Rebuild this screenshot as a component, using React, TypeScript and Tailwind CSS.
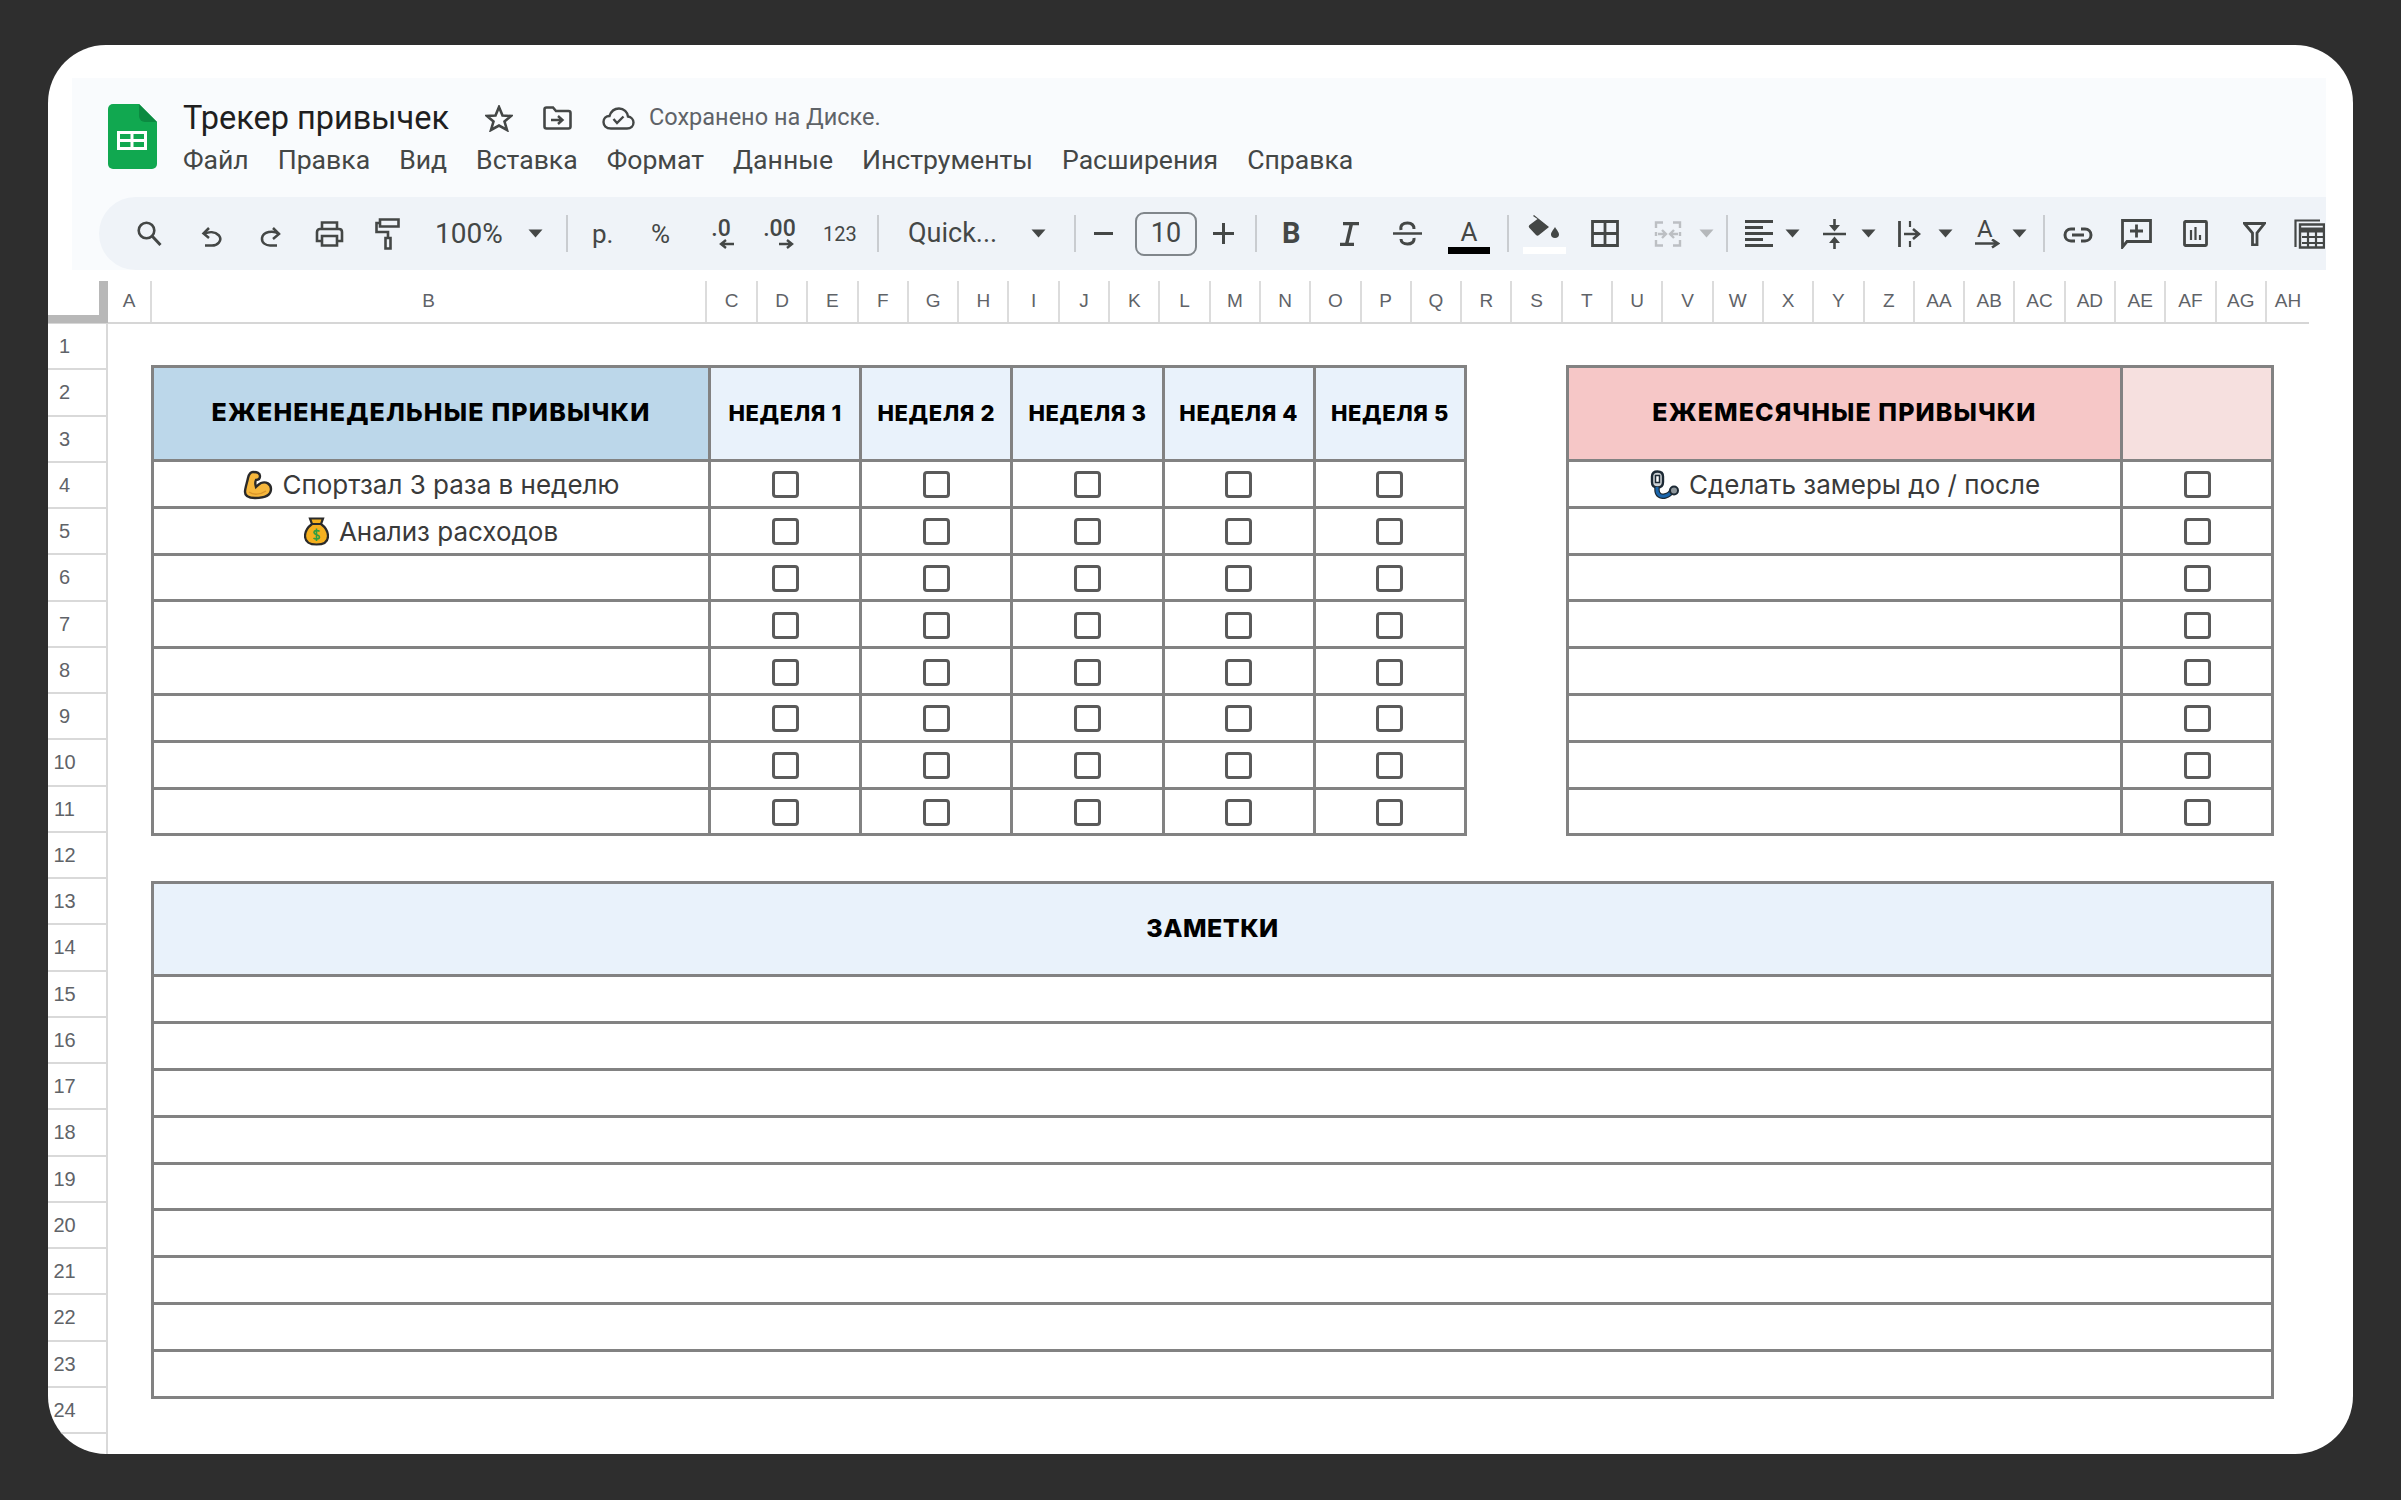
const GOOGLE = "font-['Roboto','Noto_Sans',sans-serif]";
const TABLE_FONT = "font-['Inter','Noto_Sans',sans-serif]";

const MENU = [
  "Файл",
  "Правка",
  "Вид",
  "Вставка",
  "Формат",
  "Данные",
  "Инструменты",
  "Расширения",
  "Справка",
];

const COLS_NARROW_1 = ["D","E","F","G","H","I","J","K","L","M","N","O","P","Q","R","S","T","U","V","W","X","Y","Z","AA","AB","AC","AD","AE","AF","AG"];
const ROW_NUMBERS = Array.from({ length: 25 }, (_, i) => i + 1);

function Ic({ w, h, vb, className = "", children }: { w: number; h: number; vb: string; className?: string; children: React.ReactNode }) {
  return (
    <svg width={w} height={h} viewBox={vb} fill="none" stroke="#444746" strokeWidth="2" className={`shrink-0 ${className}`}>
      {children}
    </svg>
  );
}

function Caret({ ml, grey }: { ml: string; grey?: boolean }) {
  return (
    <svg width="15" height="9" viewBox="0 0 15 9" className={`shrink-0 ${ml}`}>
      <path d="M0.5 0.5H14.5L7.5 8.5Z" fill={grey ? "#b5b8bb" : "#444746"} />
    </svg>
  );
}

function Sep({ ml }: { ml: string }) {
  return <div className={`h-[37px] w-[2px] shrink-0 bg-[#c9ccd0] ${ml}`} />;
}

function SheetsLogo() {
  return (
    <svg width="49" height="65" viewBox="0 0 49 65" className="shrink-0">
      <path d="M5 0H31L49 18V60a5 5 0 0 1-5 5H5a5 5 0 0 1-5-5V5a5 5 0 0 1 5-5Z" fill="#11a850" />
      <path d="M31 0L49 18H37a6 6 0 0 1-6-6Z" fill="#0c8a41" />
      <path d="M9 27H39V46H9Z" fill="#fff" />
      <path d="M12 30H22.5V35H12ZM25.5 30H36V35H25.5ZM12 38H22.5V43H12ZM25.5 38H36V43H25.5Z" fill="#11a850" />
    </svg>
  );
}

function Biceps() {
  return (
    <svg width="30" height="30" viewBox="0 0 30 30" className="shrink-0">
      <path d="M10 2C7 2 6 4 5 8C4 13 2 18 2 22C2 26 6 28 12 28C20 28 28 26 28 19C28 14 23 11 18 13C16 14 14 16 13 17C12 14 12 12 13 10C15 10 17 9 17 6C17 3 14 2 10 2Z" fill="#f6b73c" stroke="#2a2a2a" strokeWidth="2.400" />
      <path d="M6 22C10 25 17 25 23 21" fill="none" stroke="#d9952a" strokeWidth="1.500" />
    </svg>
  );
}

function MoneyBag() {
  return (
    <svg width="25" height="29" viewBox="0 0 25 29" className="shrink-0">
      <path d="M6 1.500H19L17 7C21 10 24 14 24 19C24 25 19 27.500 12.500 27.500C6 27.500 1 25 1 19C1 14 4 10 8 7Z" fill="#f5b01f" stroke="#2a2a2a" strokeWidth="2.200" />
      <path d="M8 7H17" stroke="#2a2a2a" strokeWidth="2" />
      <path d="M15.500 14.500C14.500 13 10 13 10 15.500C10 18 15.500 17.500 15.500 20C15.500 22.500 11 22.500 9.500 21M12.500 11.500V24" fill="none" stroke="#2f9e44" strokeWidth="1.600" />
    </svg>
  );
}

function Stethoscope() {
  return (
    <svg width="30" height="29" viewBox="0 0 30 29" className="shrink-0">
      <path d="M3 6.500C3 3 5 1.500 8.500 1.500C12 1.500 14 3 14 6.500V12C14 15.500 12 17.500 8.500 17.500C5 17.500 3 15.500 3 12Z" fill="#cfd4d7" stroke="#1d2a35" strokeWidth="2.400" />
      <path d="M6.500 5.500H10.500V12.500H6.500Z" fill="#fff" stroke="#1d2a35" strokeWidth="1.500" />
      <path d="M8 17V20C8 25 12 27 16 26C20 25 22 23 23 20" fill="none" stroke="#1d2a35" strokeWidth="5.500" />
      <path d="M8 17V20C8 25 12 27 16 26C20 25 22 23 23 20" fill="none" stroke="#1a66ac" strokeWidth="3" />
      <circle cx="25" cy="20.500" r="4" fill="#8f979c" stroke="#1d2a35" strokeWidth="2" />
    </svg>
  );
}

function Toolbar() {
  return (
    <div className={`ml-[27px] flex h-[73px] items-center overflow-hidden rounded-l-[37px] bg-[#eff3f8] text-[#444746] ${GOOGLE}`}>
      {/* search */}
      <Ic w={25} h={25} vb="0 0 25 25" className="ml-[38px]" >
        <circle cx="9.500" cy="9.500" r="7.800" strokeWidth="2.600" />
        <path d="M15 15L23.500 24" strokeWidth="3" />
      </Ic>
      {/* undo */}
      <Ic w={22} h={21} vb="0 0 22 21" className="ml-[39px] mt-[6px]">
        <path d="M3 8C8 5.500 14 5.500 18 9.500C22 15 16 19.500 11 19.500H4" strokeWidth="2.500" />
        <path d="M8 2L2.500 7.500L8 12" strokeWidth="2.500" />
      </Ic>
      {/* redo */}
      <Ic w={21} h={21} vb="0 0 21 21" className="ml-[37px] mt-[6px]">
        <path d="M19 8C13 3.500 3 6 2 12C1.500 17 6 19.500 10 19.500H17" strokeWidth="2.500" />
        <path d="M13 2L19 8L13 13" strokeWidth="2.500" />
      </Ic>
      {/* print */}
      <Ic w={29} h={26} vb="0 0 29 26" className="ml-[34px]">
        <path d="M7 8V1.500H22V8" strokeWidth="2.600" />
        <path d="M7 20H2V11C2 9 3.500 8 5 8H24C26 8 27 9 27 11V20H22" strokeWidth="2.600" />
        <path d="M7 15H22V24.500H7Z" strokeWidth="2.600" />
      </Ic>
      {/* paint format */}
      <Ic w={25} h={32} vb="0 0 25 32" className="ml-[31px]">
        <path d="M5 1.500H23.500V8.500H5Z" strokeWidth="2.600" />
        <path d="M5 5H1.500V14H13V20" strokeWidth="2.600" />
        <path d="M10.500 20H15.500V30.500H10.500Z" strokeWidth="2.600" />
      </Ic>
      <span className="ml-[35px] w-[68px] whitespace-nowrap text-[28px] leading-none">100%</span>
      <Caret ml="ml-[25px]" />
      <Sep ml="ml-[23px]" />
      <span className="ml-[24px] w-[21px] whitespace-nowrap text-[26px] leading-none">р.</span>
      <span className="ml-[38px] w-[20px] whitespace-nowrap text-[26px] leading-none">%</span>
      {/* decrease decimals */}
      <div className="ml-[35px] flex w-[30px] flex-col items-center">
        <span className="text-[23px] font-medium leading-[20px]">.0</span>
        <svg width="16" height="10" viewBox="0 0 16 10" className="ml-[12px]">
          <path d="M15 5H3M7 1L2 5L7 9" fill="none" stroke="#444746" strokeWidth="2.400" />
        </svg>
      </div>
      {/* increase decimals */}
      <div className="ml-[28px] flex w-[31px] flex-col items-center">
        <span className="text-[23px] font-medium leading-[20px]">.00</span>
        <svg width="16" height="10" viewBox="0 0 16 10" className="ml-[12px]">
          <path d="M1 5H13M9 1L14 5L9 9" fill="none" stroke="#444746" strokeWidth="2.400" />
        </svg>
      </div>
      <span className="ml-[28px] w-[33px] whitespace-nowrap text-[20px] leading-none">123</span>
      <Sep ml="ml-[21px]" />
      <span className="ml-[29px] w-[89px] whitespace-nowrap text-[27px] leading-none">Quick...</span>
      <Caret ml="ml-[34px]" />
      <Sep ml="ml-[28px]" />
      {/* minus */}
      <div className="ml-[18px] h-[3px] w-[19px] shrink-0 bg-[#444746]" />
      <div className="ml-[22px] flex h-[44px] w-[62px] shrink-0 items-center justify-center rounded-[9px] border-2 border-[#80868b] text-[27px] leading-none">
        10
      </div>
      {/* plus */}
      <Ic w={21} h={21} vb="0 0 21 21" className="ml-[16px]">
        <path d="M0 10.500H21M10.500 0V21" strokeWidth="3" />
      </Ic>
      <Sep ml="ml-[21px]" />
      <span className="ml-[25px] w-[17px] text-[29px] font-bold leading-none">B</span>
      {/* italic */}
      <Ic w={19} h={24} vb="0 0 19 24" className="ml-[41px]">
        <path d="M3 1.500H19M0 22.500H14M11.500 1.500L6.500 22.500" strokeWidth="3.400" />
      </Ic>
      {/* strikethrough */}
      <Ic w={29} h={25} vb="0 0 29 25" className="ml-[34px]">
        <path d="M0 12.500H29" strokeWidth="2.400" />
        <path d="M8 9C7 4 10 2 14.500 2C18 2 21 3.500 21 8" strokeWidth="3" />
        <path d="M21 17C21.500 21 18.500 23 14.500 23C10.500 23 8 21 8 18" strokeWidth="3" />
      </Ic>
      {/* text colour */}
      <div className="ml-[26px] mt-[6px] flex w-[42px] shrink-0 flex-col items-center">
        <span className="text-[26px] leading-[24px]">A</span>
        <div className="mt-[3px] h-[7px] w-[42px] bg-black" />
      </div>
      <Sep ml="ml-[17px]" />
      {/* fill colour */}
      <div className="ml-[14px] flex w-[43px] shrink-0 flex-col items-start">
        <svg width="32" height="26" viewBox="0 0 32 26" className="ml-[5px]">
          <path d="M6 1L21 13L11 21C10 22 9 22 8 21L1.500 14C0.500 13 0.500 12 1.500 11L9.500 5L5 2Z" fill="#444746" />
          <path d="M27 13C29.500 17 31 18.500 31 20.500C31 22.500 29.500 24 27 24C24.500 24 23 22.500 23 20.500C23 18.500 24.500 17 27 13Z" fill="#444746" />
        </svg>
        <div className="mt-[7px] h-[7px] w-[43px] bg-white" />
      </div>
      {/* borders */}
      <Ic w={28} h={27} vb="0 0 28 27" className="ml-[25px]">
        <path d="M1.500 1.500H26.500V25.500H1.500ZM14 1.500V25.500M1.500 13.500H26.500" strokeWidth="2.800" />
      </Ic>
      {/* merge */}
      <svg width="28" height="26" viewBox="0 0 28 26" fill="none" stroke="#bcbfc3" strokeWidth="2.400" className="ml-[35px] shrink-0">
        <path d="M9 1.500H2V7M2 11V15M2 19V24.500H9M19 1.500H26V7M26 11V15M26 19V24.500H19" />
        <path d="M4 13H11M8 9L12 13L8 17M24 13H17M20 9L16 13L20 17" />
      </svg>
      <Caret ml="ml-[17px]" grey />
      <Sep ml="ml-[12px]" />
      {/* align */}
      <Ic w={28} h={27} vb="0 0 28 27" className="ml-[17px]">
        <path d="M0 1.500H28M0 7.500H18M0 13.500H28M0 19.500H18M0 25.500H28" strokeWidth="2.800" />
      </Ic>
      <Caret ml="ml-[12px]" />
      {/* vertical align */}
      <Ic w={23} h={30} vb="0 0 23 30" className="ml-[23px]">
        <path d="M0 15H23" strokeWidth="2.600" />
        <path d="M11.500 0V9" strokeWidth="2.600" />
        <path d="M11.500 30V21" strokeWidth="2.600" />
        <path d="M6 6H17L11.500 12.500Z" fill="#444746" stroke="none" />
        <path d="M6 24H17L11.500 17.500Z" fill="#444746" stroke="none" />
      </Ic>
      <Caret ml="ml-[15px]" />
      {/* wrap */}
      <Ic w={23} h={26} vb="0 0 23 26" className="ml-[22px]">
        <path d="M1.500 0V26" strokeWidth="2.800" />
        <path d="M12 0V6M12 20V26" strokeWidth="2.200" />
        <path d="M6 13H19M15 8L21 13L15 18" strokeWidth="2.600" />
      </Ic>
      <Caret ml="ml-[17px]" />
      {/* rotate */}
      <div className="ml-[22px] flex w-[25px] shrink-0 flex-col items-start">
        <span className="ml-[2px] text-[24px] leading-[20px]">A</span>
        <svg width="25" height="10" viewBox="0 0 25 10">
          <path d="M0 4.500H22M17 0.500L23 4.500L17 8.500" fill="none" stroke="#444746" strokeWidth="2.600" />
        </svg>
      </div>
      <Caret ml="ml-[12px]" />
      <Sep ml="ml-[16px]" />
      {/* link */}
      <Ic w={30} h={16} vb="0 0 30 16" className="ml-[18px] mt-[2px]">
        <path d="M12 2H8C4.500 2 2 4.500 2 8C2 11.500 4.500 14 8 14H12M18 2H22C25.500 2 28 4.500 28 8C28 11.500 25.500 14 22 14H18M9 8H21" strokeWidth="3" />
      </Ic>
      {/* comment */}
      <Ic w={31} h={30} vb="0 0 31 30" className="ml-[28px]">
        <path d="M1.500 1.500H29.500V22.500H6L1.500 28Z" strokeWidth="2.800" />
        <path d="M9 12H22M15.500 5.500V18.500" strokeWidth="2.800" />
      </Ic>
      {/* chart */}
      <Ic w={25} h={27} vb="0 0 25 27" className="ml-[31px]">
        <path d="M2.500 1.500H22.500C23 1.500 23.500 2 23.500 2.500V24.500C23.500 25 23 25.500 22.500 25.500H2.500C2 25.500 1.500 25 1.500 24.500V2.500C1.500 2 2 1.500 2.500 1.500Z" strokeWidth="2.800" />
        <path d="M8 10V20M12.500 7V20M17 15V20" strokeWidth="2.200" />
      </Ic>
      {/* filter */}
      <Ic w={23} h={24} vb="0 0 23 24" className="ml-[35px]">
        <path d="M1.500 1.500H21.500L14 11V23H9.500V11Z" strokeWidth="2.800" />
      </Ic>
      {/* functions, cut by the edge */}
      <Ic w={31} h={30} vb="0 0 31 30" className="ml-[28px]">
        <path d="M1.500 28V1.500H26" strokeWidth="2.200" />
        <path d="M6 5.500H30V28.500H6Z" strokeWidth="2.400" />
        <path d="M6 11H31" strokeWidth="5" />
        <path d="M8 18H30M8 24H30M14 12V29M22 12V29" strokeWidth="2.200" />
      </Ic>
    </div>
  );
}

function ColHeader() {
  const cell = "flex h-full shrink-0 items-center justify-center border-r-2 border-[#dcdcdc]";
  return (
    <div className="mt-[11px] flex h-[43px] w-[2261px] border-b-2 border-[#d6d6d6] font-['Liberation_Sans',sans-serif] text-[19px] text-[#5f6368]">
      <div className="h-[42px] w-[60px] shrink-0 border-b-[8px] border-r-[9px] border-[#b8b8b8]" />
      <div className={`${cell} w-[44px]`}>A</div>
      <div className={`${cell} w-[555px]`}>B</div>
      <div className={`${cell} w-[51px]`}>C</div>
      {COLS_NARROW_1.map((c) => (
        <div key={c} className={`${cell} w-[50.3px]`}>
          {c}
        </div>
      ))}
      <div className="flex h-full flex-1 items-center justify-center">AH</div>
    </div>
  );
}

function RowHeader() {
  return (
    <div className="w-[60px] shrink-0 border-r-2 border-[#d9d9d9] font-['Liberation_Sans',sans-serif] text-[20px] text-[#5f6368]">
      {ROW_NUMBERS.map((n) => (
        <div key={n} className="flex h-[46.25px] w-full items-center border-b-2 border-[#d9d9d9]">
          <span className="w-[33px] text-center">{n}</span>
        </div>
      ))}
    </div>
  );
}

function Checkbox() {
  return <div className="mt-[2px] h-[27px] w-[27px] rounded-[4px] border-[3px] border-[#5a5a5a]" />;
}

function Cell({ className = "", children }: { className?: string; children?: React.ReactNode }) {
  return (
    <div className={`flex items-center justify-center border-b-[3px] border-r-[3px] border-[#828282] ${className}`}>
      {children}
    </div>
  );
}

const BODY_TEXT = "mt-[2px] flex items-center gap-[10px] whitespace-nowrap text-[26px] leading-none text-[#3a3a3a]";
const HEAD_TEXT = "mb-[2px] whitespace-nowrap font-extrabold leading-none text-black";

function WeeklyTable() {
  const rows: React.ReactNode[] = [
    <span key="a" className={BODY_TEXT}>
      <Biceps />
      Спортзал 3 раза в неделю
    </span>,
    <span key="b" className={BODY_TEXT}>
      <MoneyBag />
      Анализ расходов
    </span>,
    null,
    null,
    null,
    null,
    null,
    null,
  ];
  return (
    <div className="grid w-[1316px] grid-cols-[557px_repeat(5,1fr)] grid-rows-[94px_repeat(8,46.800px)] border-l-[3px] border-t-[3px] border-[#828282]">
      <Cell className="bg-[#bcd7ea]">
        <span className={`${HEAD_TEXT} text-[25px] tracking-[1.2px]`}>ЕЖЕНЕНЕДЕЛЬНЫЕ ПРИВЫЧКИ</span>
      </Cell>
      {[1, 2, 3, 4, 5].map((w) => (
        <Cell key={w} className="bg-[#e9f2fb]">
          <span className={`${HEAD_TEXT} text-[22px] tracking-[0.6px]`}>НЕДЕЛЯ {w}</span>
        </Cell>
      ))}
      {rows.map((row, i) => (
        <div key={i} className="contents">
          <Cell>{row}</Cell>
          {[1, 2, 3, 4, 5].map((w) => (
            <Cell key={w}>
              <Checkbox />
            </Cell>
          ))}
        </div>
      ))}
    </div>
  );
}

function MonthlyTable() {
  const rows: React.ReactNode[] = [
    <span key="a" className={BODY_TEXT}>
      <Stethoscope />
      Сделать замеры до / после
    </span>,
    null,
    null,
    null,
    null,
    null,
    null,
    null,
  ];
  return (
    <div className="ml-[99px] grid w-[708px] grid-cols-[554px_1fr] grid-rows-[94px_repeat(8,46.800px)] border-l-[3px] border-t-[3px] border-[#828282]">
      <Cell className="bg-[#f6c7c7]">
        <span className={`${HEAD_TEXT} text-[25px] tracking-[1.1px]`}>ЕЖЕМЕСЯЧНЫЕ ПРИВЫЧКИ</span>
      </Cell>
      <Cell className="bg-[#f6e0df]" />
      {rows.map((row, i) => (
        <div key={i} className="contents">
          <Cell>{row}</Cell>
          <Cell>
            <Checkbox />
          </Cell>
        </div>
      ))}
    </div>
  );
}

function NotesTable() {
  return (
    <div className="mt-[45px] w-[2123px] border-l-[3px] border-t-[3px] border-[#828282]">
      <Cell className="h-[93px] bg-[#e9f2fb]">
        <span className={`${HEAD_TEXT} text-[25px] tracking-[0.5px]`}>ЗАМЕТКИ</span>
      </Cell>
      {Array.from({ length: 9 }, (_, i) => (
        <Cell key={i} className="h-[46.800px]" />
      ))}
    </div>
  );
}

export default function App() {
  return (
    <div className="h-[1500px] w-[2401px] overflow-hidden bg-[#2e2e2e] pl-[48px] pt-[45px]">
      <div className="h-[1409px] w-[2305px] overflow-hidden rounded-[58px] bg-white">
        <div className="ml-[24px] mt-[33px] h-[192px] w-[2254px] bg-[#f9fbfd]">
          <div className="flex h-[119px] pl-[36px] pt-[26px]">
            <SheetsLogo />
            <div className={`ml-[26px] mt-[-2px] ${GOOGLE}`}>
              <div className="flex h-[32px] items-center">
                <span className="w-[265px] whitespace-nowrap text-[32.500px] leading-none text-[#1f1f1f]">Трекер привычек</span>
                <Ic w={28} h={27} vb="0 0 28 27" className="ml-[37px]">
                  <path d="M14 2L17.500 10.500L26 11L19.500 16.500L22 25L14 20.500L6 25L8.500 16.500L2 11L10.500 10.500Z" strokeWidth="2.600" />
                </Ic>
                <Ic w={29} h={24} vb="0 0 29 24" className="ml-[30px]">
                  <path d="M1.500 3.500C1.500 2 2.500 1.500 3.500 1.500H10L13 5H25.500C27 5 27.500 6 27.500 7V20.500C27.500 22 26.500 22.500 25.500 22.500H3.500C2.500 22.500 1.500 22 1.500 20.500Z" strokeWidth="2.600" />
                  <path d="M8 14H19M15 10L19.500 14L15 18" strokeWidth="2.400" />
                </Ic>
                <Ic w={33} h={23} vb="0 0 33 23" className="ml-[30px]">
                  <path d="M9 21.500C4 21.500 1.500 18.500 1.500 15C1.500 11.500 4 9 7.500 9C9 4.500 12.500 1.500 17 1.500C22 1.500 25.500 5 26 9.500C29 10 31.500 12.500 31.500 15.500C31.500 19 29 21.500 25 21.500Z" strokeWidth="2.400" />
                  <path d="M11.500 12L15 16L21.500 9.500" strokeWidth="2.400" />
                </Ic>
                <span className="ml-[14px] whitespace-nowrap text-[23.500px] leading-none text-[#5f6368]">Сохранено на Диске.</span>
              </div>
              <div className="mt-[11px] flex gap-[29px] whitespace-nowrap text-[26.600px] leading-[30px] text-[#444746]">
                {MENU.map((m) => (
                  <span key={m}>{m}</span>
                ))}
              </div>
            </div>
          </div>
          <Toolbar />
        </div>
        <ColHeader />
        <div className="flex">
          <RowHeader />
          <div className={`ml-[43px] mt-[41px] ${TABLE_FONT}`}>
            <div className="flex">
              <WeeklyTable />
              <MonthlyTable />
            </div>
            <NotesTable />
          </div>
        </div>
      </div>
    </div>
  );
}
